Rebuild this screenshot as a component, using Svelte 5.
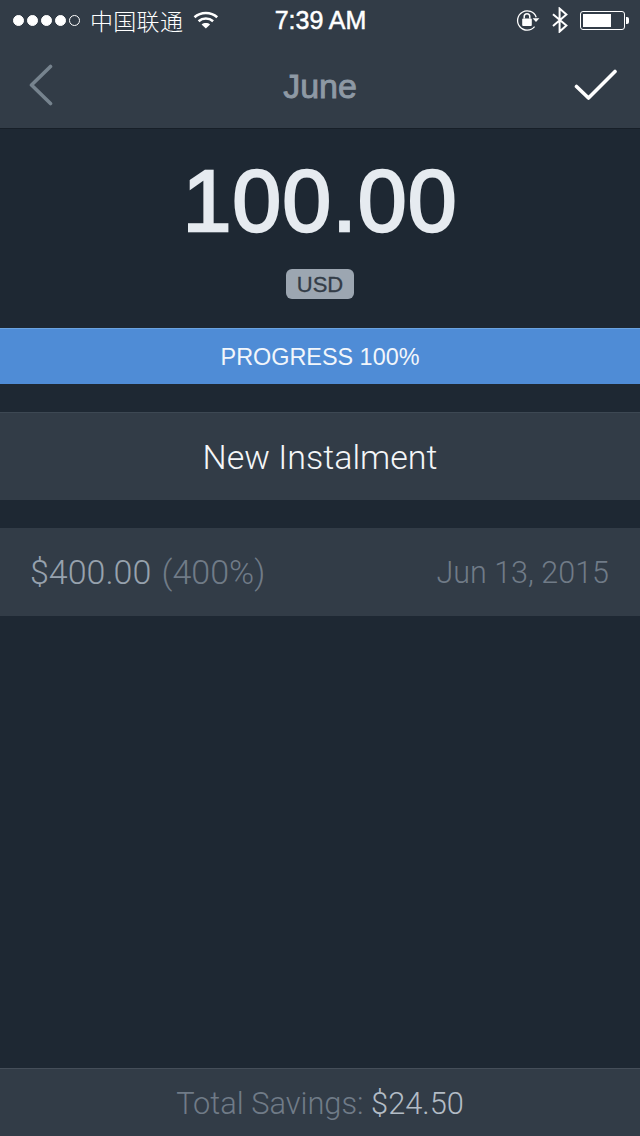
<script>
  const signal = [true, true, true, true, false];
</script>

<div class="screen">
  <header class="top">
    <div class="status">
      <div class="status-left">
        <span class="dots">
          {#each signal as on}
            <i class="dot" class:on></i>
          {/each}
        </span>
        <span class="carrier">中国联通</span>
        <svg class="wifi" width="26" height="20" viewBox="0 0 26 20" fill="none" stroke="#fff" stroke-width="2.6">
          <path d="M1.5 7.2C7.8 1.6 17.9 1.6 24.2 7.2" />
          <path d="M5.6 11.2C9.8 7.6 15.9 7.6 20.1 11.2" />
          <path d="M12.85 18.6L8.6 14.4C11 12.6 14.7 12.6 17.1 14.4Z" fill="#fff" stroke="none" />
        </svg>
      </div>
      <div class="clock">7:39 AM</div>
      <div class="status-right">
        <svg class="lock" width="24" height="22" viewBox="0 0 24 22" fill="none">
          <path d="M20.2 8.2A9.6 9.6 0 1 0 18.6 17.6" stroke="#fff" stroke-width="1.3" />
          <path d="M16.6 9.2H23.4L20 13Z" fill="#fff" />
          <rect x="6.2" y="9.4" width="9.6" height="7.6" rx="1" fill="#fff" />
          <path d="M8.2 9.6V7.6A2.8 2.8 0 0 1 13.8 7.6V9.6" stroke="#fff" stroke-width="1.5" />
        </svg>
        <svg class="bt" width="18" height="26" viewBox="0 0 18 26" fill="none" stroke="#fff" stroke-width="2">
          <path d="M2 7.2L15.4 18.6L8.6 24.6V1.6L15.4 7.6L2 19" />
        </svg>
        <div class="battery">
          <div class="cell"><div class="charge" style="width: {72}%"></div></div>
          <div class="nub"></div>
        </div>
      </div>
    </div>
    <nav class="nav">
      <svg class="back" width="26" height="42" viewBox="0 0 26 42" fill="none" stroke="#76838e" stroke-width="3.6" stroke-linecap="round" stroke-linejoin="round">
        <path d="M22.5 2.5L3.5 21L22.5 39.5" />
      </svg>
      <h1>June</h1>
      <svg class="check" width="44" height="32" viewBox="0 0 44 32" fill="none" stroke="#fff" stroke-width="3.6" stroke-linecap="round" stroke-linejoin="round">
        <path d="M2.5 17.5L14.5 29L41 2.5" />
      </svg>
    </nav>
  </header>

  <section class="amount">
    <div class="value">100.00</div>
    <div class="currency">USD</div>
  </section>

  <div class="progress">PROGRESS 100%</div>

  <button class="new">New Instalment</button>

  <div class="row">
    <span class="money">$400.00 <span class="pct">(400%)</span></span>
    <span class="date">Jun 13, 2015</span>
  </div>

  <footer class="total">Total Savings: <span class="sum">$24.50</span></footer>
</div>

<style>
  :global(body) {
    margin: 0;
    background: #1e2833;
  }

  .screen {
    width: 640px;
    height: 1136px;
    display: flex;
    flex-direction: column;
    background: #1e2833;
    font-family: "Liberation Sans", Arial, sans-serif;
    color: #fff;
    overflow: hidden;
  }

  .top {
    height: 128px;
    background: #323c47;
    border-bottom: 1px solid #171f28;
    flex: none;
  }

  .status {
    height: 40px;
    display: grid;
    grid-template-columns: 1fr auto 1fr;
    align-items: center;
    padding: 0 11px 0 13px;
  }

  .status-left {
    display: flex;
    align-items: center;
  }

  .dots {
    display: flex;
    gap: 3px;
  }

  .dot {
    width: 11px;
    height: 11px;
    border-radius: 50%;
    border: 1px solid #fff;
    box-sizing: border-box;
  }

  .dot.on {
    background: #fff;
  }

  .carrier {
    margin-left: 10px;
    font-family: "Noto Sans CJK SC", sans-serif;
    font-weight: 300;
    font-size: 23px;
    line-height: 40px;
    letter-spacing: 0.3px;
  }

  .wifi {
    margin-left: 10px;
  }

  .clock {
    font-size: 25px;
    -webkit-text-stroke: 0.5px #fff;
    line-height: 40px;
    margin-right: 1px;
  }

  .status-right {
    display: flex;
    align-items: center;
    justify-content: flex-end;
  }

  .lock {
    margin-right: 11px;
  }

  .bt {
    margin-right: 11px;
  }

  .battery {
    display: flex;
    align-items: center;
    gap: 1px;
  }

  .cell {
    width: 45px;
    height: 19px;
    box-sizing: border-box;
    border: 1px solid #fff;
    border-radius: 3px;
    padding: 2px;
  }

  .charge {
    height: 100%;
    background: #fff;
  }

  .nub {
    width: 3px;
    height: 7px;
    background: #fff;
    border-radius: 0 2px 2px 0;
  }

  .nav {
    height: 88px;
    display: flex;
    align-items: center;
    justify-content: space-between;
    position: relative;
    padding: 0 22px 0 28px;
  }

  .nav h1 {
    margin: 0;
    position: absolute;
    left: 0;
    right: 0;
    top: 2px;
    text-align: center;
    font-size: 34px;
    font-weight: 400;
    -webkit-text-stroke: 0.9px #8e99a4;
    color: #8e99a4;
    line-height: 88px;
  }

  .back {
    margin-top: 2px;
  }

  .check {
    margin-top: 1px;
  }

  .amount {
    height: 199px;
    flex: none;
    display: flex;
    flex-direction: column;
    align-items: center;
  }

  .value {
    margin-top: 26px;
    font-size: 88px;
    letter-spacing: 1px;
    line-height: 92px;
    font-weight: 400;
    -webkit-text-stroke: 2.4px #e6ebf0;
    color: #e6ebf0;
  }

  .currency {
    margin-top: 22px;
    width: 68px;
    height: 30px;
    border-radius: 6px;
    background: #9ca6b1;
    color: #333c47;
    font-size: 22px;
    -webkit-text-stroke: 0.3px #333c47;
    line-height: 32px;
    text-align: center;
  }

  .progress {
    height: 55px;
    flex: none;
    border-top: 1px solid #6ba3e0;
    background: #4f8cd6;
    font-size: 23.4px;
    line-height: 56px;
    text-align: center;
    color: #f2f6fb;
  }

  .new {
    display: block;
    width: 100%;
    height: 88px;
    flex: none;
    margin-top: 28px;
    padding: 0;
    border: 0;
    border-top: 1px solid #3d4853;
    background: #323c47;
    color: #f4f6f8;
    font-family: Roboto, sans-serif;
    font-size: 34px;
    font-weight: 300;
  }

  .row {
    height: 88px;
    flex: none;
    margin-top: 28px;
    background: #323c47;
    display: flex;
    align-items: center;
    justify-content: space-between;
    padding: 0 31px 0 30px;
    font-family: Roboto, sans-serif;
    font-weight: 300;
    font-size: 34px;
  }

  .money {
    color: #97a2ae;
    word-spacing: 2px;
  }

  .pct {
    color: #707b87;
  }

  .date {
    font-size: 30.5px;
    color: #707b87;
  }

  .total {
    margin-top: auto;
    height: 67px;
    flex: none;
    border-top: 1px solid #454e59;
    background: #323c47;
    font-family: Roboto, sans-serif;
    font-weight: 300;
    font-size: 30.8px;
    line-height: 69px;
    text-align: center;
    color: #707b87;
  }

  .sum {
    color: #b3bcc6;
  }
</style>
